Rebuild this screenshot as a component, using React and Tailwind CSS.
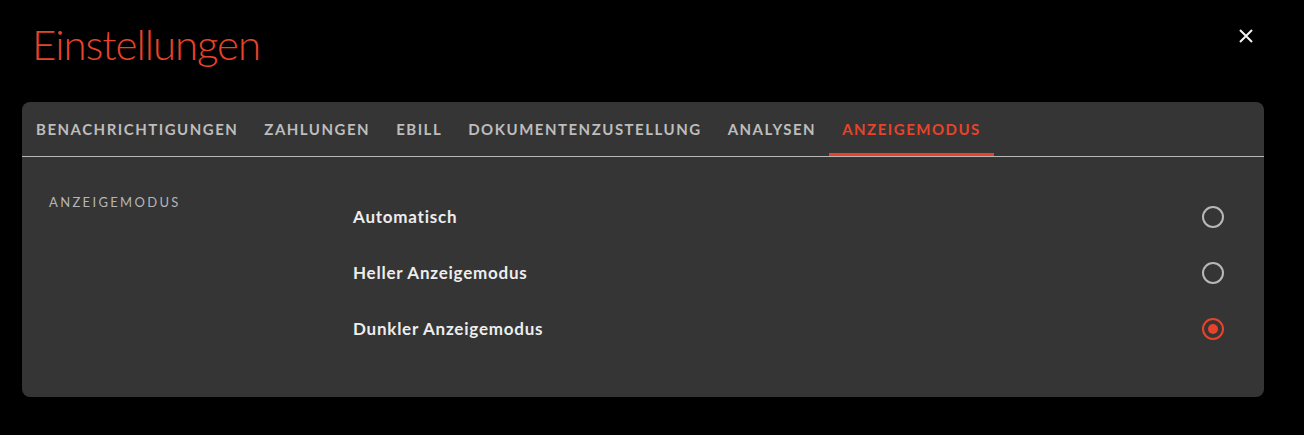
import React from "react";

const tabs = [
  "Benachrichtigungen",
  "Zahlungen",
  "eBill",
  "Dokumentenzustellung",
  "Analysen",
  "Anzeigemodus",
];

const options = [
  { label: "Automatisch", checked: false },
  { label: "Heller Anzeigemodus", checked: false },
  { label: "Dunkler Anzeigemodus", checked: true },
];

function Radio({ checked }) {
  return checked ? (
    <span className="flex h-[22px] w-[22px] items-center justify-center rounded-full border-2 border-[#e8432a]">
      <span className="h-[10px] w-[10px] rounded-full bg-[#e8432a]" />
    </span>
  ) : (
    <span className="h-[22px] w-[22px] rounded-full border-2 border-[#b8b8b8]" />
  );
}

export default function App() {
  return (
    <div
      className="min-h-[435px] w-full bg-black pl-[22px] pr-[40px]"
      style={{ fontFamily: "Lato, 'Open Sans', sans-serif" }}
    >
      <div className="flex h-[102px] items-start justify-between">
        <h1 className="mt-[19px] pl-[10px] text-[42px] font-light leading-[50px] tracking-[-0.025em] text-[#e8432a]">
          Einstellungen
        </h1>
        <svg
          className="mr-[11px] mt-[29px]"
          width="14"
          height="14"
          viewBox="0 0 14 14"
          fill="none"
          stroke="#f2f2f2"
          strokeWidth="2"
        >
          <path d="M1 1L13 13M13 1L1 13" />
        </svg>
      </div>

      <div className="rounded-lg bg-[#353535]">
        <div className="flex border-b border-[#b8b8b8] pl-[1px]">
          {tabs.map((t) => {
            const active = t === "Anzeigemodus";
            return (
              <div
                key={t}
                className={
                  "flex h-[54px] items-center border-b-[3px] px-[13px] pt-[3px] text-[15px] font-bold uppercase tracking-[0.1em] " +
                  (active
                    ? "border-[#e8432a] text-[#e8432a]"
                    : "border-transparent text-[#bdbdbd]")
                }
              >
                {t}
              </div>
            );
          })}
        </div>

        <div className="flex pb-[40px] pl-[27px] pr-[40px] pt-[32px]">
          <div className="w-[304px] pt-[5px] text-[13px] uppercase leading-[16px] tracking-[0.18em] text-[#b5b5b5]">
            Anzeigemodus
          </div>
          <div className="flex flex-1 flex-col">
            {options.map((o) => (
              <div
                key={o.label}
                className="flex h-[56px] items-center justify-between"
              >
                <span className="text-[17px] font-bold tracking-[0.045em] text-[#ededed]">
                  {o.label}
                </span>
                <Radio checked={o.checked} />
              </div>
            ))}
          </div>
        </div>
      </div>
    </div>
  );
}
